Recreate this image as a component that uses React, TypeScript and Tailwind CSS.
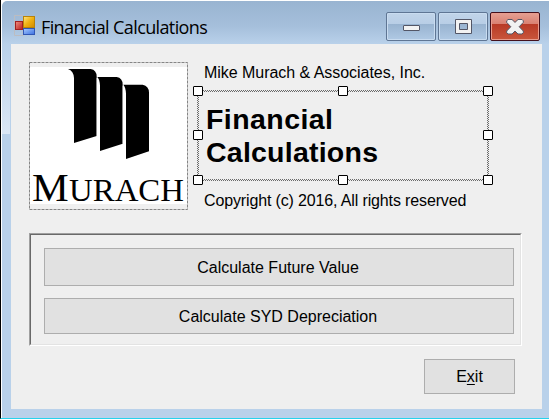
import React from "react";

function FormIcon() {
  return (
    <svg className="block h-[22px] w-[22px]" viewBox="0 0 22 22">
      <defs>
        <linearGradient id="gold" x1="0" y1="0" x2="1" y2="1">
          <stop offset="0" stopColor="#ffe680" />
          <stop offset="0.5" stopColor="#f0b010" />
          <stop offset="1" stopColor="#d08a00" />
        </linearGradient>
        <linearGradient id="red" x1="0" y1="0" x2="1" y2="1">
          <stop offset="0" stopColor="#f09080" />
          <stop offset="1" stopColor="#b81c1c" />
        </linearGradient>
        <linearGradient id="blue" x1="0" y1="0" x2="1" y2="1">
          <stop offset="0" stopColor="#a8ccff" />
          <stop offset="1" stopColor="#3a6fe0" />
        </linearGradient>
      </defs>
      <path d="M.5 .5H9M.5 .5V20.5H9M9 15V21" fill="none" stroke="#bcbcc0" />
      <rect x="9.5" y="1.5" width="11" height="11" fill="url(#gold)" stroke="#b98308" />
      <rect x="1.5" y="6.5" width="7" height="8" fill="url(#red)" stroke="#a32020" />
      <rect x="9.5" y="13.5" width="11" height="6" fill="url(#blue)" stroke="#3057b5" />
    </svg>
  );
}

const captionBase =
  "flex h-[29px] items-center justify-center rounded-[2px] border";
const captionBlue =
  "border-[#5f7694] bg-[linear-gradient(#c1d4e9_0%,#b8cee6_40%,#98b3d0_41%,#b0c9e4_100%)] shadow-[inset_0_0_0_1px_#c9dcf0]";

function CaptionButtons() {
  return (
    <div className="flex gap-[2px]">
      <div className={`${captionBase} ${captionBlue} w-[50px]`}>
        <div className="mt-[3px] h-[6px] w-[17px] rounded-[1px] border border-[#535666] bg-[#f2f2f2]" />
      </div>
      <div className={`${captionBase} ${captionBlue} w-[50px]`}>
        <svg className="h-[15px] w-[17px]" viewBox="0 0 17 15">
          <path
            fillRule="evenodd"
            d="M.5 .5H16.5V14.5H.5ZM4.5 4.5H12.5V10.5H4.5Z"
            fill="#f2f2f2"
            stroke="#535666"
          />
        </svg>
      </div>
      <div
        className={`${captionBase} w-[50px] border-[#43101c] bg-[linear-gradient(#e5a093_0%,#d98172_40%,#b83a26_41%,#c9563c_100%)] shadow-[inset_0_0_0_1px_#e79c8e]`}
      >
        <svg className="h-[16px] w-[18px]" viewBox="0 0 18 16">
          <path
            d="M.7 1.8L2 .5H6L9 3.4L12 .5H16L17.3 1.8V3.4L13.2 7.7L17.3 12V13.7L16 15H12L9 12.1L6 15H2L.7 13.7V12L4.8 7.7L.7 3.4Z"
            fill="#f2f2f2"
            stroke="#535666"
          />
        </svg>
      </div>
    </div>
  );
}

function MurachLogo() {
  return (
    <svg className="block h-[148px] w-[159px]" viewBox="27 36 477 444">
      <rect x="30" y="51" width="471" height="411" fill="#fff" />
      <rect x="28.5" y="37.5" width="474" height="441" fill="none" stroke="#858585" strokeWidth="3" strokeDasharray="9 3" />
      <path d="M144 57H212Q230 60 230 80V258L162 279V84Q161 63 144 57Z" />
      <path d="M232 81H290Q308 84 308 104V281L240 303V107Q239 88 232 81Z" />
      <path d="M310 104H368Q387 108 387 128V304L318 327V131Q317 111 310 104Z" />
      <path d="M231 84V258M309 107V281" stroke="#fff" strokeWidth="2" />
      <g fontFamily="'Liberation Serif', serif">
        <text x="36" y="454" fontSize="123" textLength="110" lengthAdjust="spacingAndGlyphs">M</text>
        <text x="147" y="454" fontSize="97" textLength="345" lengthAdjust="spacingAndGlyphs">URACH</text>
      </g>
    </svg>
  );
}

function Handle({ place }: { place: string }) {
  return <div className={`absolute h-[10px] w-[10px] rounded-[1px] border border-black bg-white ${place}`} />;
}

function SelectedHeading() {
  return (
    <div className="relative -ml-[7px] mt-[8px] h-[91px] w-[292px]">
      <svg className="absolute inset-0 h-[91px] w-[292px]" shapeRendering="crispEdges">
        <defs>
          <pattern id="hatch" width="2" height="2" patternUnits="userSpaceOnUse">
            <rect width="2" height="2" fill="#efefef" />
            <rect width="1" height="1" fill="#6a6a6a" />
            <rect x="1" y="1" width="1" height="1" fill="#6a6a6a" />
          </pattern>
        </defs>
        <path fillRule="evenodd" d="M0 0H292V91H0ZM2 2V89H290V2Z" fill="url(#hatch)" />
      </svg>
      <h1 className="pl-[9px] pt-[13px] text-[28.5px] leading-[33px] font-bold">
        <svg
          className="block h-[66px] w-[190px] overflow-visible"
          fontFamily="'Liberation Sans', Arial, sans-serif"
        >
          <text x="0" y="26" textLength="127" lengthAdjust="spacing">Financial</text>
          <text x="0" y="59" textLength="172" lengthAdjust="spacing">Calculations</text>
        </svg>
      </h1>
      <Handle place="-left-[4px] -top-[4px]" />
      <Handle place="left-[141px] -top-[4px]" />
      <Handle place="left-[286px] -top-[4px]" />
      <Handle place="-left-[4px] top-[40px]" />
      <Handle place="left-[286px] top-[40px]" />
      <Handle place="-left-[4px] top-[85px]" />
      <Handle place="left-[141px] top-[85px]" />
      <Handle place="left-[286px] top-[85px]" />
    </div>
  );
}

const button = "flex items-center justify-center border border-[#adadad] bg-[#e1e1e1]";

export default function App() {
  return (
    <div className="h-[419px] w-[549px] overflow-hidden border-b border-l border-b-[#27d3ec] border-l-black bg-white font-['Liberation_Sans',Arial,sans-serif] text-[16px] leading-[18px] text-black">
      <div className="ml-px mt-px h-[417px] w-[547px] rounded-tl-[5px] bg-[linear-gradient(#99b4d1_0px,#a5bfdb_25px,#b9d1ea_43px)]">
        <header className="flex h-[43px] pl-[12px]">
          <div className="mt-[14px]">
            <FormIcon />
          </div>
          <div className="ml-[5px] mt-[14px] w-[170px] whitespace-nowrap font-['Open_Sans','Noto_Sans',sans-serif] text-[18px] leading-[24px] tracking-[-0.62px]">
            Financial Calculations
          </div>
          <div className="ml-auto mr-[9px] mt-[11px]">
            <CaptionButtons />
          </div>
        </header>
        <div className="flex">
          <div className="h-[90px] w-[8px] bg-[linear-gradient(#b9d1ea,#dbe7f5)]" />
          <main className="ml-px h-[365px] w-[531px] bg-[#efefef] pl-[18px] pt-[18px]">
            <div className="flex h-[171px]">
              <MurachLogo />
              <div className="ml-[16px] pt-[2px]">
                <p className="w-[240px] whitespace-nowrap tracking-[-0.04px]">Mike Murach &amp; Associates, Inc.</p>
                <SelectedHeading />
                <p className="mt-[11px] whitespace-nowrap tracking-[-0.14px]">Copyright (c) 2016, All rights reserved</p>
              </div>
            </div>
            <div className="h-[113px] w-[493px] border border-b-white border-l-[#a0a0a0] border-r-white border-t-[#a0a0a0]">
              <div className="flex h-[111px] flex-col gap-[12px] border border-b-[#e3e3e3] border-l-[#696969] border-r-[#e3e3e3] border-t-[#696969] pl-[13px] pt-[13px]">
                <div className={`${button} h-[38px] w-[470px] pr-[2px] pt-[2px]`}>Calculate Future Value</div>
                <div className={`${button} h-[36px] w-[470px] pr-[2px] pt-[2px]`}>Calculate SYD Depreciation</div>
              </div>
            </div>
            <div className={`${button} ml-[395px] mt-[13px] h-[35px] w-[91px]`}>
              <span>
                E<span className="underline underline-offset-2">x</span>it
              </span>
            </div>
          </main>
        </div>
      </div>
    </div>
  );
}
